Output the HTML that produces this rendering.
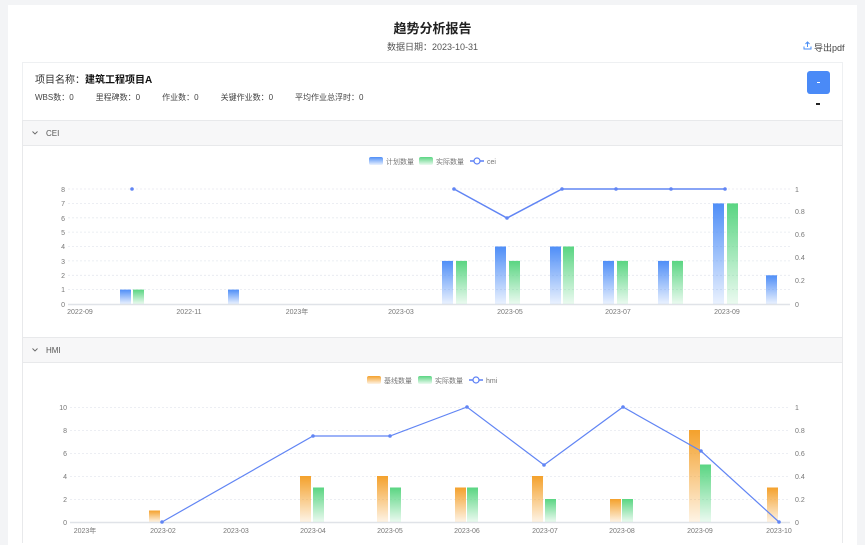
<!DOCTYPE html>
<html><head><meta charset="utf-8"><style>
*{margin:0;padding:0;box-sizing:border-box}
body{width:865px;height:539px;overflow:hidden;background:#f3f4f6;font-family:"Liberation Sans","Noto Sans CJK SC",sans-serif;color:#333;position:relative}
.card{position:absolute;left:8px;top:5px;width:849px;height:540px;background:#fff}
.abs{position:absolute;white-space:nowrap}
</style></head><body>
<div class="card"></div>
<div class="abs" style="left:0;width:865px;top:18px;text-align:center;font-size:13px;font-weight:bold;color:#222">趋势分析报告</div>
<div class="abs" style="left:0;width:865px;top:40px;text-align:center;font-size:9px;color:#555">数据日期：2023-10-31</div>
<svg class="abs" style="left:803px;top:41px" width="9" height="9" viewBox="0 0 9 9"><path d="M4.5 6V1M2.5 3L4.5 1L6.5 3M1 5.5V8H8V5.5" fill="none" stroke="#4a8ef5" stroke-width="1"/></svg>
<div class="abs" style="left:814px;top:41px;font-size:9px;color:#444">导出pdf</div>
<div class="abs" style="left:22px;top:62px;width:821px;height:58px;border:1px solid #eef0f2;border-bottom:none"></div>
<div class="abs" style="left:35px;top:71px;font-size:10px;color:#333">项目名称：<b style="color:#111">建筑工程项目A</b></div>
<div class="abs" style="left:35px;top:92px;font-size:8px;color:#444">WBS数：0<span style="margin-left:22px">里程碑数：0</span><span style="margin-left:22px">作业数：0</span><span style="margin-left:22px">关键作业数：0</span><span style="margin-left:22px">平均作业总浮时：0</span></div>
<div class="abs" style="left:807px;top:71px;width:23px;height:23px;background:#4a8af7;border-radius:3px"></div>
<div class="abs" style="left:817px;top:82px;width:3px;height:1px;background:#fff"></div>
<div class="abs" style="left:816px;top:103px;width:4px;height:2px;background:#222"></div>
<div class="abs" style="left:22px;top:120px;width:821px;height:220px;border:1px solid #e8e9eb"></div>
<div class="abs" style="left:22px;top:120px;width:821px;height:26px;background:#f7f7f8;border:1px solid #e8e9eb;font-size:8px;color:#555;padding:8px 0 0 23px">CEI</div>
<div class="abs" style="left:22px;top:337px;width:821px;height:26px;background:#f7f7f8;border:1px solid #e8e9eb;font-size:8px;color:#555;padding:8px 0 0 23px">HMI</div>
<div class="abs" style="left:22px;top:363px;width:821px;height:180px;border-left:1px solid #e8e9eb;border-right:1px solid #e8e9eb"></div>
<svg class="abs" style="left:0;top:0" width="865" height="539" font-family="Liberation Sans,Noto Sans CJK SC,sans-serif">
<defs>
<linearGradient id="gb" x1="0" y1="0" x2="0" y2="1"><stop offset="0" stop-color="#4f8ef7"/><stop offset="1" stop-color="#4f8ef7" stop-opacity=".12"/></linearGradient>
<linearGradient id="gg" x1="0" y1="0" x2="0" y2="1"><stop offset="0" stop-color="#5ad582"/><stop offset="1" stop-color="#5ad582" stop-opacity=".12"/></linearGradient>
<linearGradient id="go" x1="0" y1="0" x2="0" y2="1"><stop offset="0" stop-color="#f4a12c"/><stop offset="1" stop-color="#f4a12c" stop-opacity=".12"/></linearGradient>
</defs>
<path d="M32.5 131.5L35 134L37.5 131.5" fill="none" stroke="#666" stroke-width=".9"/>
<path d="M32.5 348.5L35 351L37.5 348.5" fill="none" stroke="#666" stroke-width=".9"/>
<g font-size="7" fill="#777">
<rect x="369" y="157" width="14" height="8" rx="2" fill="url(#gb)"/><text x="386" y="164">计划数量</text>
<rect x="419" y="157" width="14" height="8" rx="2" fill="url(#gg)"/><text x="436" y="164">实际数量</text>
<line x1="470" y1="161" x2="484" y2="161" stroke="#5b7ff5" stroke-width="1.5"/><circle cx="477" cy="161" r="3" fill="#fff" stroke="#5b7ff5" stroke-width="1.2"/><text x="487" y="164">cei</text>
<g stroke="#e6e9ef" stroke-dasharray="2,2" stroke-width=".8">
<line x1="68" x2="790" y1="189" y2="189"/><line x1="68" x2="790" y1="203.4" y2="203.4"/><line x1="68" x2="790" y1="217.8" y2="217.8"/><line x1="68" x2="790" y1="232.1" y2="232.1"/><line x1="68" x2="790" y1="246.5" y2="246.5"/><line x1="68" x2="790" y1="260.9" y2="260.9"/><line x1="68" x2="790" y1="275.3" y2="275.3"/><line x1="68" x2="790" y1="289.6" y2="289.6"/>
</g>
<line x1="68" x2="790" y1="304.5" y2="304.5" stroke="#e0e3e8" stroke-width="1.5"/>
<g text-anchor="end"><text x="65" y="192">8</text><text x="65" y="206">7</text><text x="65" y="221">6</text><text x="65" y="235">5</text><text x="65" y="249">4</text><text x="65" y="264">3</text><text x="65" y="278">2</text><text x="65" y="292">1</text><text x="65" y="307">0</text></g>
<g><text x="795" y="192">1</text><text x="795" y="214">0.8</text><text x="795" y="237">0.6</text><text x="795" y="260">0.4</text><text x="795" y="283">0.2</text><text x="795" y="307">0</text></g>
<g text-anchor="middle"><text x="80" y="314">2022-09</text><text x="189" y="314">2022-11</text><text x="297" y="314">2023年</text><text x="401" y="314">2023-03</text><text x="510" y="314">2023-05</text><text x="618" y="314">2023-07</text><text x="727" y="314">2023-09</text></g>
<g fill="url(#gb)"><rect x="120" y="289.6" width="11" height="14.4"/><rect x="228" y="289.6" width="11" height="14.4"/><rect x="442" y="260.9" width="11" height="43.1"/><rect x="495" y="246.5" width="11" height="57.5"/><rect x="550" y="246.5" width="11" height="57.5"/><rect x="603" y="260.9" width="11" height="43.1"/><rect x="658" y="260.9" width="11" height="43.1"/><rect x="713" y="203.4" width="11" height="100.6"/><rect x="766" y="275.3" width="11" height="28.7"/></g>
<g fill="url(#gg)"><rect x="133" y="289.6" width="11" height="14.4"/><rect x="456" y="260.9" width="11" height="43.1"/><rect x="509" y="260.9" width="11" height="43.1"/><rect x="563" y="246.5" width="11" height="57.5"/><rect x="617" y="260.9" width="11" height="43.1"/><rect x="672" y="260.9" width="11" height="43.1"/><rect x="727" y="203.4" width="11" height="100.6"/></g>
<polyline points="454,189 507,218 562,189 616,189 671,189 725,189" fill="none" stroke="#6185f4" stroke-width="1.5"/>
<g fill="#6185f4"><circle cx="132" cy="189" r="1.8"/><circle cx="454" cy="189" r="1.8"/><circle cx="507" cy="218" r="1.8"/><circle cx="562" cy="189" r="1.8"/><circle cx="616" cy="189" r="1.8"/><circle cx="671" cy="189" r="1.8"/><circle cx="725" cy="189" r="1.8"/></g>
<rect x="367" y="376" width="14" height="8" rx="2" fill="url(#go)"/><text x="384" y="383">基线数量</text>
<rect x="418" y="376" width="14" height="8" rx="2" fill="url(#gg)"/><text x="435" y="383">实际数量</text>
<line x1="469" y1="380" x2="483" y2="380" stroke="#5b7ff5" stroke-width="1.5"/><circle cx="476" cy="380" r="3" fill="#fff" stroke="#5b7ff5" stroke-width="1.2"/><text x="486" y="383">hmi</text>
<g stroke="#e6e9ef" stroke-dasharray="2,2" stroke-width=".8">
<line x1="70" x2="790" y1="407.5" y2="407.5"/><line x1="70" x2="790" y1="430.5" y2="430.5"/><line x1="70" x2="790" y1="453.5" y2="453.5"/><line x1="70" x2="790" y1="476.5" y2="476.5"/><line x1="70" x2="790" y1="499.5" y2="499.5"/>
</g>
<line x1="70" x2="790" y1="522.5" y2="522.5" stroke="#e0e3e8" stroke-width="1.5"/>
<g text-anchor="end"><text x="67" y="410">10</text><text x="67" y="433">8</text><text x="67" y="456">6</text><text x="67" y="479">4</text><text x="67" y="502">2</text><text x="67" y="525">0</text></g>
<g><text x="795" y="410">1</text><text x="795" y="433">0.8</text><text x="795" y="456">0.6</text><text x="795" y="479">0.4</text><text x="795" y="502">0.2</text><text x="795" y="525">0</text></g>
<g text-anchor="middle"><text x="85" y="533">2023年</text><text x="163" y="533">2023-02</text><text x="236" y="533">2023-03</text><text x="313" y="533">2023-04</text><text x="390" y="533">2023-05</text><text x="467" y="533">2023-06</text><text x="545" y="533">2023-07</text><text x="622" y="533">2023-08</text><text x="700" y="533">2023-09</text><text x="779" y="533">2023-10</text></g>
<g fill="url(#go)"><rect x="149" y="510.5" width="11" height="11.5"/><rect x="300" y="476" width="11" height="46"/><rect x="377" y="476" width="11" height="46"/><rect x="455" y="487.5" width="11" height="34.5"/><rect x="532" y="476" width="11" height="46"/><rect x="610" y="499" width="11" height="23"/><rect x="689" y="430" width="11" height="92"/><rect x="767" y="487.5" width="11" height="34.5"/></g>
<g fill="url(#gg)"><rect x="313" y="487.5" width="11" height="34.5"/><rect x="390" y="487.5" width="11" height="34.5"/><rect x="467" y="487.5" width="11" height="34.5"/><rect x="545" y="499" width="11" height="23"/><rect x="622" y="499" width="11" height="23"/><rect x="700" y="464.5" width="11" height="57.5"/></g>
<polyline points="162,522 313,436 390,436 467,407 544,465 623,407 701,451 779,522" fill="none" stroke="#6185f4" stroke-width="1.2"/>
<g fill="#6185f4"><circle cx="162" cy="522" r="1.8"/><circle cx="313" cy="436" r="1.8"/><circle cx="390" cy="436" r="1.8"/><circle cx="467" cy="407" r="1.8"/><circle cx="544" cy="465" r="1.8"/><circle cx="623" cy="407" r="1.8"/><circle cx="701" cy="451" r="1.8"/><circle cx="779" cy="522" r="1.8"/></g>
</g>
</svg>
</body></html>
